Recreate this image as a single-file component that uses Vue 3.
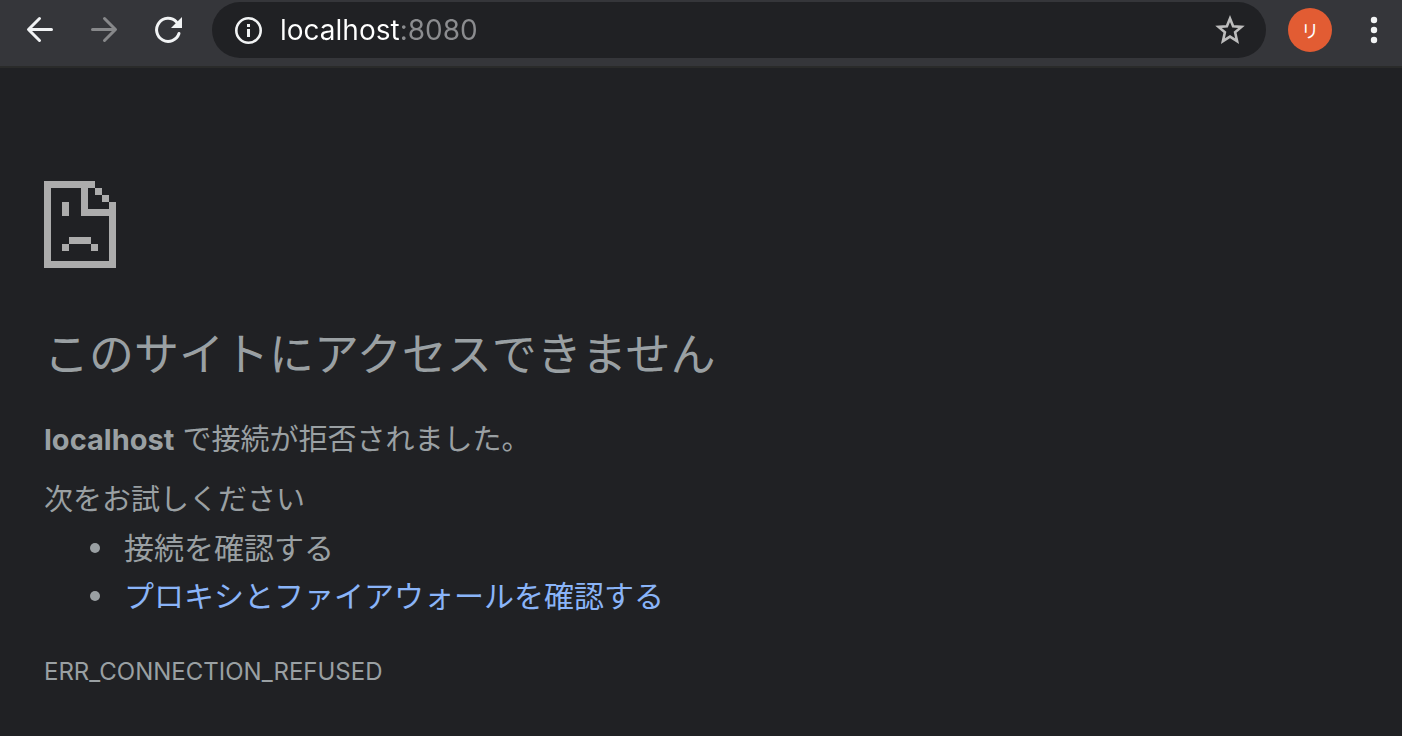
<template>
  <div class="browser">
    <header class="toolbar">
      <nav class="nav-buttons" aria-label="Navigation">
        <button type="button" class="icon-button" aria-label="Back" @click="goBack">
          <svg width="32" height="32" viewBox="0 0 32 32" class="stroke-icon">
            <path d="M27.500 15.500H5M15.500 4.500L4.500 15.500L15.500 26.500" />
          </svg>
        </button>
        <button type="button" class="icon-button" aria-label="Forward" disabled>
          <svg width="32" height="32" viewBox="0 0 32 32" class="stroke-icon">
            <path d="M4.500 15.500H27M16.500 4.500L27.500 15.500L16.500 26.500" />
          </svg>
        </button>
        <button type="button" class="icon-button" aria-label="Reload" @click="reload">
          <svg width="32" height="32" viewBox="0 0 32 32">
            <path d="M27 19.500A11.500 11.500 0 1 1 24.500 8" fill="none" stroke="currentColor" stroke-width="3" stroke-linecap="round" />
            <path d="M30 3V14H19Z" fill="currentColor" />
          </svg>
        </button>
      </nav>

      <form class="address-bar" @submit.prevent="reload">
        <button type="button" class="icon-button" aria-label="Site information">
          <svg width="28" height="28" viewBox="0 0 28 28">
            <circle cx="14.500" cy="14.500" r="12.200" fill="none" stroke="currentColor" stroke-width="2.600" />
            <path d="M13 8h3v3h-3zM13 13h3v8h-3z" fill="currentColor" />
          </svg>
        </button>
        <input v-model="address" class="address-input" type="text" aria-label="Address" spellcheck="false" />
        <button type="button" class="icon-button star" aria-label="Bookmark this page">
          <svg width="30" height="30" viewBox="0 0 30 30">
            <path d="M15 3.500L18.100 11.200L26.500 11.900L20.100 17.300L22.100 26.200L15 21.600L7.900 26.200L9.900 17.300L3.500 11.900L11.900 11.200Z" fill="none" stroke="currentColor" stroke-width="2.600" />
          </svg>
        </button>
      </form>

      <button type="button" class="avatar" aria-label="Profile">リ</button>
      <button type="button" class="icon-button menu" aria-label="Menu">
        <svg width="8" height="28" viewBox="0 0 8 28">
          <circle cx="4" cy="4" r="3.200" />
          <circle cx="4" cy="14" r="3.200" />
          <circle cx="4" cy="24" r="3.200" />
        </svg>
      </button>
    </header>

    <main class="error-page">
      <svg class="sad-page" width="72" height="87" viewBox="0 0 72 87" shape-rendering="crispEdges" aria-hidden="true">
        <path d="M0 0H51V7H44V28H65V21H72V87H0ZM7 7V80H65V35H37V7Z" fill-rule="evenodd" />
        <path d="M51 7h7v7h-7zM58 14h7v7h-7zM18 21h7v14h-7zM25 56h22v7h-22zM18 63h7v7h-7zM47 63h7v7h-7z" />
      </svg>

      <h1>このサイトにアクセスできません</h1>
      <p class="summary"><strong>{{ host }}</strong> で接続が拒否されました。</p>

      <p>次をお試しください</p>
      <ul class="suggestions">
        <li>接続を確認する</li>
        <li><a href="#proxy">プロキシとファイアウォールを確認する</a></li>
      </ul>

      <div class="error-code">ERR_CONNECTION_REFUSED</div>
    </main>
  </div>
</template>

<script setup>
import { ref } from 'vue';

const host = 'localhost';
const address = ref('localhost:8080');

const goBack = () => {
  window.history.back();
};

const reload = () => {
  window.location.reload();
};
</script>

<style>
body {
  margin: 0;
  background: #202124;
}
</style>

<style scoped>
.browser {
  min-height: 100vh;
  background: #202124;
  color: #9aa0a3;
  font-family: Inter, "Noto Sans CJK JP", sans-serif;
}

.toolbar {
  display: flex;
  align-items: center;
  box-sizing: border-box;
  height: 68px;
  padding: 0 16px 6px 24px;
  background: #35363a;
  border-bottom: 2px solid #2a2b2a;
}

.nav-buttons {
  display: flex;
  gap: 32px;
  margin-right: 28px;
}

.icon-button {
  display: flex;
  align-items: center;
  justify-content: center;
  padding: 0;
  border: none;
  background: none;
  color: #f1f3f4;
  cursor: pointer;
}

.icon-button:disabled {
  color: #87888a;
  cursor: default;
}

.stroke-icon {
  fill: none;
  stroke: currentColor;
  stroke-width: 3;
  stroke-linecap: round;
  stroke-linejoin: round;
}

.address-bar {
  display: flex;
  flex: 1;
  align-items: center;
  box-sizing: border-box;
  height: 56px;
  min-width: 0;
  padding: 0 21px 0 22px;
  border-radius: 28px;
  background: #202124;
}

/* host is bright, the port after it is dimmed */
.address-input {
  flex: 1;
  min-width: 0;
  height: 40px;
  margin: 0 16px 0 18px;
  padding: 0;
  border: none;
  outline: none;
  background: linear-gradient(90deg, #ffffff 120px, #8b8c8f 120px);
  background-clip: text;
  -webkit-background-clip: text;
  color: transparent;
  caret-color: #ffffff;
  font-family: Inter, sans-serif;
  font-size: 28px;
}

.star {
  color: #bdbdbd;
}

.avatar {
  width: 44px;
  height: 44px;
  margin: 0 38px 0 22px;
  padding: 0;
  border: none;
  border-radius: 50%;
  background: #e25c33;
  color: #ffffff;
  font-family: "Noto Sans CJK JP", sans-serif;
  font-size: 18px;
  cursor: pointer;
}

.menu {
  margin-right: 8px;
  fill: currentColor;
}

.error-page {
  padding: 113px 44px 40px;
  font-size: 29px;
  line-height: 48px;
}

.sad-page {
  display: block;
  fill: #acacac;
}

h1 {
  margin: 55px 0 29px;
  font-size: 45px;
  font-weight: 400;
  line-height: 64px;
}

p {
  margin: 0;
}

.summary {
  margin-bottom: 12px;
}

.suggestions {
  margin: 0;
  padding-left: 46px;
  font-size: 30px;
  list-style: none;
}

.suggestions li {
  display: flex;
  align-items: center;
}

.suggestions li::before {
  content: "";
  width: 10px;
  height: 10px;
  margin-right: 24px;
  border-radius: 50%;
  background: currentColor;
}

a {
  color: #8ab4f8;
  text-decoration: none;
}

.error-code {
  margin-top: 28px;
  font-size: 24px;
}
</style>
